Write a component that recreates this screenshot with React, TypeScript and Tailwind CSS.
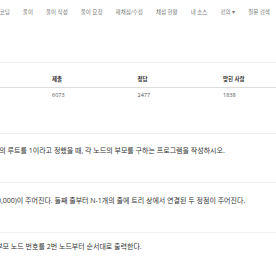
const nav = ['숏코딩', '풀이', '풀이 작성', '풀이 요청', '재채점/수정', '채점 현황', '내 소스', '강의 ▾', '질문 검색'];

const sections = [
  { title: '문제', top: 'mt-[31px]', gap: 'mt-[11px]', body: '루트 없는 트리가 주어진다. 이때, 트리의 루트를 1이라고 정했을 때, 각 노드의 부모를 구하는 프로그램을 작성하시오.' },
  { title: '입력', top: 'mt-[25px]', gap: 'mt-[12px]', body: '첫째 줄에 노드의 개수 N (2 ≤ N ≤ 100,000)이 주어진다. 둘째 줄부터 N-1개의 줄에 트리 상에서 연결된 두 정점이 주어진다.' },
  { title: '출력', top: 'mt-[25px]', gap: 'mt-[8px]', body: '첫째 줄부터 N-1개의 줄에 각 노드의 부모 노드 번호를 2번 노드부터 순서대로 출력한다.' },
];

export default function App() {
  return (
    <div className="h-[260px] w-[276px] overflow-hidden bg-white font-['Open_Sans','Noto_Sans_CJK_KR',sans-serif]">
      <ul className="ml-[-12px] flex h-[24px] items-center whitespace-nowrap text-[5.5px] text-[#777]">
        {nav.map((n) => (
          <li key={n} className="px-[6.55px]">{n}</li>
        ))}
      </ul>

      <div className="ml-[-122px] w-[520px]">
        <div className="mt-[38px] border-t border-[#eee]" />
        <table className="mt-[9px] w-[513px] table-fixed text-left text-[5.5px]">
          <thead>
            <tr className="h-[15px] border-b border-[#ddd] font-bold text-[#333]">
              {['시간 제한', '메모리 제한', '제출', '정답', '맞힌 사람', '정답 비율'].map((h) => (
                <th key={h} className="px-[3px]">{h}</th>
              ))}
            </tr>
          </thead>
          <tbody>
            <tr className="h-[15px] text-[#555]">
              {['1 초', '256 MB', '6073', '2477', '1838', '41.957%'].map((d) => (
                <td key={d} className="px-[3px]">{d}</td>
              ))}
            </tr>
          </tbody>
        </table>

        {sections.map((s) => (
          <section key={s.title} className={s.top}>
            <div className="border-t border-[#f0f0f0]" />
            <p className={`${s.gap} whitespace-nowrap pl-[12px] text-[7px] leading-[12px] text-[#333]`}>{s.body}</p>
          </section>
        ))}
      </div>
    </div>
  );
}
